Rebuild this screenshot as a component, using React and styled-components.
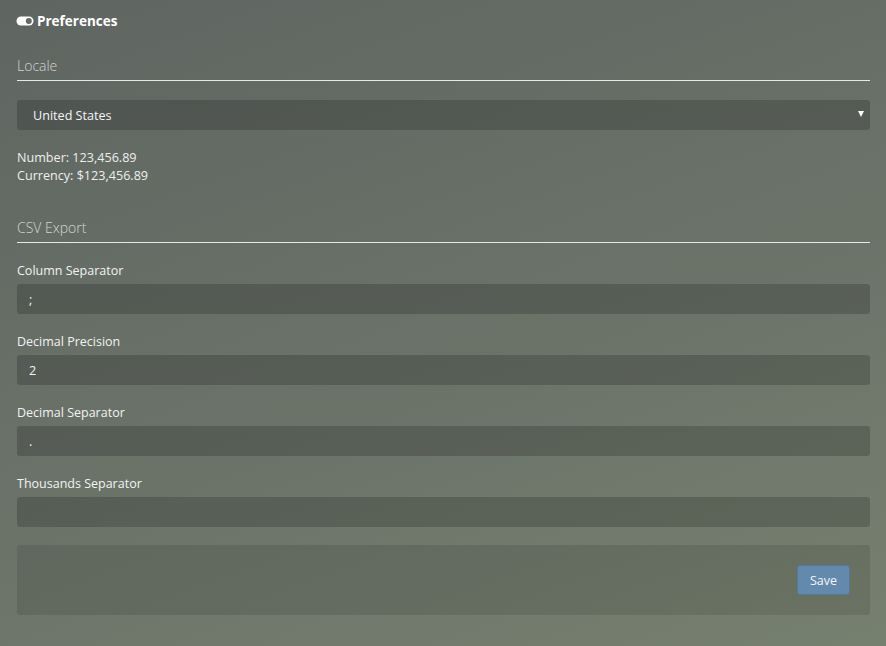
import React from "react";
import styled, { createGlobalStyle } from "styled-components";

const Global = createGlobalStyle`
  html, body { margin: 0; padding: 0; height: 100%; }
  body {
    font-family: "Open Sans", "Liberation Sans", sans-serif;
    color: #f2f2f2;
    background: linear-gradient(160deg, #5f6561 0%, #6b7369 55%, #76806f 100%);
    background-attachment: fixed;
  }
  * { box-sizing: border-box; }
`;

const Page = styled.div`
  min-height: 100vh;
  padding: 11px 16px 20px 17px;
`;

const Title = styled.h1`
  margin: 0;
  display: flex;
  align-items: center;
  gap: 3px;
  font-size: 13.5px;
  line-height: 20px;
  font-weight: 700;
  color: #ffffff;
  margin-left: -1px;
`;

const Legend = styled.div`
  font-size: 14px;
  line-height: 21px;
  font-weight: 300;
  color: #d2d5d2;
  padding-bottom: 4px;
  border-bottom: 1px solid #e8e8e8;
  margin-top: ${(p) => p.$top}px;
  margin-bottom: ${(p) => p.$bottom}px;
`;

const SelectBox = styled.div`
  position: relative;
  height: 30px;
  border-radius: 3px;
  background: rgba(0, 0, 0, 0.18);
  display: flex;
  align-items: center;
  padding-left: 16px;
  font-size: 12.6px;
  color: #f4f4f4;
`;

const Caret = styled.span`
  position: absolute;
  right: 6px;
  top: 11px;
  width: 0;
  height: 0;
  border-left: 3.5px solid transparent;
  border-right: 3.5px solid transparent;
  border-top: 6px solid #ffffff;
`;

const Info = styled.div`
  margin-top: 19px;
  font-size: 12.6px;
  line-height: 18px;
  color: #eeeeee;
`;

const FieldList = styled.div`
  display: flex;
  flex-direction: column;
  gap: 19px;
  margin-bottom: 18px;
`;

const Field = styled.div``;

const Label = styled.div`
  font-size: 12.5px;
  line-height: 18px;
  color: #f2f2f2;
  margin-bottom: 4px;
`;

const Input = styled.div`
  height: 30px;
  border-radius: 3px;
  background: rgba(0, 0, 0, 0.18);
  display: flex;
  align-items: center;
  padding-left: 12px;
  font-size: 12.6px;
  color: #f4f4f4;
`;

const Footer = styled.div`
  height: 70px;
  border-radius: 3px;
  background: rgba(0, 0, 0, 0.1);
  display: flex;
  justify-content: flex-end;
  align-items: center;
  padding-right: 20px;
`;

const Button = styled.button`
  height: 30px;
  width: 53px;
  border-radius: 3px;
  border: 1px solid #56799a;
  background: #6389ad;
  color: #f4f6f8;
  font-family: inherit;
  font-size: 12.5px;
  padding: 0;
`;

function ToggleIcon() {
  return (
    <svg width="18" height="10" viewBox="0 0 18 10" aria-hidden="true">
      <rect x="0.5" y="0.5" width="17" height="9" rx="4.5" fill="#ffffff" />
      <circle cx="12.8" cy="5" r="3" fill="#636a64" />
    </svg>
  );
}

const fields = [
  { label: "Column Separator", value: ";" },
  { label: "Decimal Precision", value: "2" },
  { label: "Decimal Separator", value: "." },
  { label: "Thousands Separator", value: "" },
];

export default function App() {
  return (
    <>
      <Global />
      <Page>
        <Title>
          <ToggleIcon />
          Preferences
        </Title>
        <Legend $top={24} $bottom={19}>Locale</Legend>
        <SelectBox>
          United States
          <Caret />
        </SelectBox>
        <Info>
          Number: 123,456.89
          <br />
          Currency: $123,456.89
        </Info>
        <Legend $top={32} $bottom={19}>CSV Export</Legend>
        <FieldList>
          {fields.map((f) => (
            <Field key={f.label}>
              <Label>{f.label}</Label>
              <Input>{f.value}</Input>
            </Field>
          ))}
        </FieldList>
        <Footer>
          <Button>Save</Button>
        </Footer>
      </Page>
    </>
  );
}
